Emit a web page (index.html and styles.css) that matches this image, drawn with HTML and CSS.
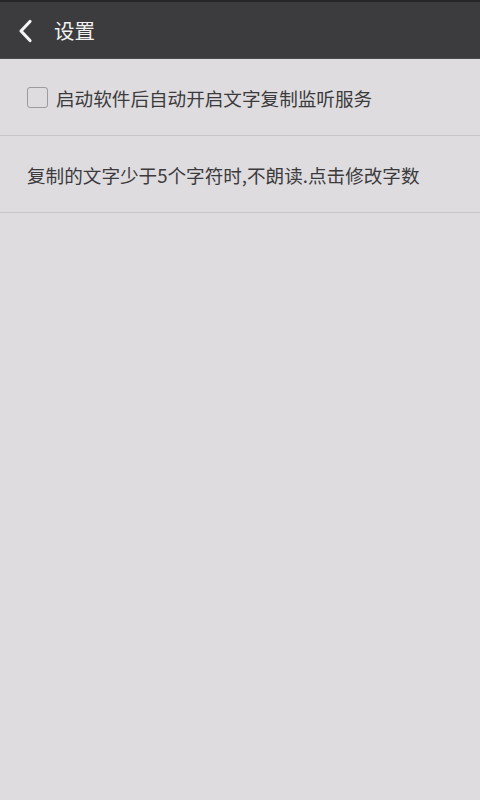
FILE: index.html
```html
<!DOCTYPE html>
<html lang="zh">
<head>
<meta charset="utf-8">
<title>设置</title>
<link rel="stylesheet" href="styles.css">
</head>
<body>
<div class="app">
  <header class="bar">
    <svg class="back" width="16" height="24" viewBox="0 0 16 24"><path d="M13 2.5 L4 12 L13 21.5" fill="none" stroke="#f4f4f4" stroke-width="3.2" stroke-linecap="round" stroke-linejoin="round"/></svg>
    <span class="title">设置</span>
  </header>
  <div class="row">
    <span class="check"></span>
    <span class="label">启动软件后自动开启文字复制监听服务</span>
  </div>
  <div class="row">
    <span class="label">复制的文字少于5个字符时,不朗读.点击修改字数</span>
  </div>
</div>
</body>
</html>
```
FILE: styles.css
```css
html, body {
  margin: 0;
  padding: 0;
  background: #dedcdf;
}
.app {
  width: 480px;
  height: 800px;
  background: #dedcdf;
  font-family: "Noto Sans CJK SC", "Liberation Sans", sans-serif;
}
.bar {
  height: 56px;
  background: #3c3b3d;
  border-top: 2px solid #262527;
  border-bottom: 1px solid #4a494b;
  display: flex;
  align-items: center;
  box-sizing: content-box;
}
.back {
  margin-left: 17px;
  margin-top: 1px;
}
.title {
  margin-left: 21px;
  color: #f2f2f2;
  font-size: 20.5px;
}
.row {
  height: 76px;
  border-bottom: 1px solid #c7c5c8;
  display: flex;
  align-items: center;
  padding-left: 27px;
}
.check {
  width: 19px;
  height: 19px;
  border: 1.5px solid #9c9b9d;
  border-radius: 3px;
  margin-right: 8px;
  margin-top: 1px;
}
.label {
  color: #3b3a3c;
  font-size: 18.6px;
}
```
